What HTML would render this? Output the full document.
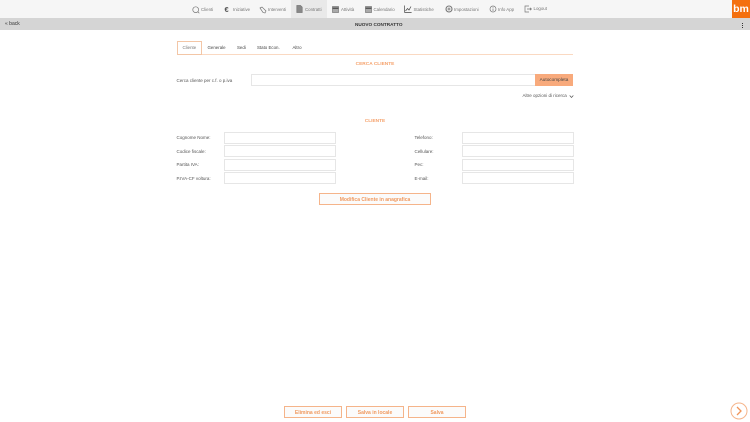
<!DOCTYPE html>
<html><head><meta charset="utf-8"><style>
html,body{margin:0;padding:0;width:750px;height:422px;overflow:hidden;background:#fff;font-family:"Liberation Sans",sans-serif}
#w{position:absolute;left:0;top:0;width:750px;height:422px;filter:blur(.25px)}
.a{position:absolute;white-space:nowrap}
.n{top:6px;font-size:4.4px;line-height:7px;color:#777}
.l{font-size:4.5px;line-height:7px;color:#555}
.i{position:absolute;box-sizing:border-box;background:#fff;border:1px solid #e6e6e6;height:12px;width:112px}
.b{position:absolute;box-sizing:border-box;border:1px solid #f5b48a;background:#fbfbfb;color:#f09a60;font-size:5px;font-weight:bold;text-align:center;height:12px;line-height:12.5px}
.t{font-size:4.4px;line-height:7px;color:#444;top:44px}
.h{font-size:4.8px;font-weight:bold;color:#f5a26c;line-height:7px}
svg{position:absolute;fill:none;stroke:#777;stroke-width:.7}
</style></head><body><div id="w">
<div class="a" style="left:0;top:0;width:750px;height:18px;background:#f6f6f6"></div>
<div class="a" style="left:291px;top:0;width:36px;height:18px;background:#e9e9e9"></div>
<div class="a" style="left:0;top:18px;width:750px;height:12px;background:#d5d5d5"></div>
<div class="a" style="left:732px;top:0;width:18px;height:18px;background:#f4700f;color:#fff;font-size:10.5px;font-weight:bold;line-height:19px;text-align:center">bm</div>

<svg style="left:192px;top:5.5px" width="8" height="8"><circle cx="3.7" cy="3.7" r="2.9"/><path d="M5.8 5.8L7.3 7.3"/></svg>
<div class="a n" style="left:201px">Clienti</div>
<div class="a" style="left:224.5px;top:4.5px;font-size:7.5px;line-height:10px;font-weight:bold;color:#555">€</div>
<div class="a n" style="left:233px">Iniziative</div>
<svg style="left:259px;top:5.5px" width="8" height="8"><path d="M1 2L3 1L7 5L6 7L4 6.5Z"/></svg>
<div class="a n" style="left:268px">Interventi</div>
<svg style="left:296px;top:5px" width="7" height="8"><path d="M.8.5H4.5L6.2 2.2V7.5H.8Z" fill="#888"/></svg>
<div class="a n" style="left:305px">Contratti</div>
<svg style="left:332px;top:5.5px" width="7" height="7"><rect x=".5" y=".5" width="6" height="6" fill="#aaa"/><path d="M.5 2.2H6.5" stroke="#444" stroke-width="1.2"/></svg>
<div class="a n" style="left:341px">Attività</div>
<svg style="left:365px;top:5.5px" width="7" height="7"><rect x=".5" y=".5" width="6" height="6" fill="#aaa"/><path d="M.5 2.2H6.5" stroke="#444" stroke-width="1.2"/></svg>
<div class="a n" style="left:373.5px">Calendario</div>
<svg style="left:404px;top:5px" width="8" height="8"><path d="M.6.5V7.4H7.6M1.5 6L3.5 3.5L5 5L7 1.5" stroke="#444"/></svg>
<div class="a n" style="left:413.5px">Statistiche</div>
<svg style="left:445px;top:5px" width="8" height="8"><circle cx="4" cy="4" r="3" stroke-width="1.1"/><circle cx="4" cy="4" r="1"/></svg>
<div class="a n" style="left:454px">Impostazioni</div>
<svg style="left:489px;top:5px" width="8" height="8"><circle cx="4" cy="4" r="3"/><path d="M4 3.5V6M4 2V2.8"/></svg>
<div class="a n" style="left:498px">Info App</div>
<svg style="left:524px;top:4.5px" width="8" height="8"><path d="M5 1H1V7H5M3 4H7.5M6 2.8L7.5 4L6 5.2"/></svg>
<div class="a n" style="left:533.5px;top:5px">Logout</div>

<div class="a" style="left:5px;top:21px;font-size:5px;line-height:7px;color:#333">« back</div>
<div class="a" style="left:355px;top:21px;font-size:4.7px;line-height:7px;font-weight:bold;color:#333">NUOVO CONTRATTO</div>
<div class="a" style="left:741.5px;top:22.5px;width:1.5px;height:1.5px;background:#333;box-shadow:0 2px #333,0 4px #333"></div>

<div class="a" style="left:177px;top:54px;width:396px;height:1px;background:#fad9c2"></div>
<div class="a" style="left:176.5px;top:40.5px;width:25px;height:14px;box-sizing:border-box;border:1px solid #f3c6a6;background:#fff"></div>
<div class="a t" style="left:182.5px;color:#777">Cliente</div>
<div class="a t" style="left:207.5px">Generale</div>
<div class="a t" style="left:237px">Sedi</div>
<div class="a t" style="left:257px">Stato Econ.</div>
<div class="a t" style="left:292.5px">Altro</div>

<div class="a h" style="left:0;width:750px;text-align:center;top:61px">CERCA CLIENTE</div>
<div class="a l" style="left:176.5px;top:76.5px">Cerca cliente per c.f. o p.iva</div>
<div class="i" style="left:251px;top:74px;width:285px"></div>
<div class="a" style="left:535px;top:74px;width:38px;height:12px;background:#f8aa7c;color:#444;font-size:4.7px;line-height:12.5px;text-align:center">Autocompleta</div>
<div class="a l" style="left:522.5px;top:92px">Altre opzioni di ricerca</div>
<svg style="left:569px;top:93.5px" width="5" height="5"><path d="M.7 1.5L2.5 3.5L4.3 1.5" stroke="#555"/></svg>
<div class="a h" style="left:0;width:750px;text-align:center;top:117.5px">CLIENTE</div>

<div class="a l" style="left:176.5px;top:134px">Cognome Nome:</div>
<div class="a l" style="left:176.5px;top:147.5px">Codice fiscale:</div>
<div class="a l" style="left:176.5px;top:161px">Partita IVA:</div>
<div class="a l" style="left:176.5px;top:174.5px">P.IVA-CF voltura:</div>
<div class="i" style="left:224px;top:132px"></div>
<div class="i" style="left:224px;top:145px"></div>
<div class="i" style="left:224px;top:159px"></div>
<div class="i" style="left:224px;top:172px"></div>
<div class="a l" style="left:414.5px;top:134px">Telefono:</div>
<div class="a l" style="left:414.5px;top:147.5px">Cellulare:</div>
<div class="a l" style="left:414.5px;top:161px">Pec:</div>
<div class="a l" style="left:414.5px;top:174.5px">E-mail:</div>
<div class="i" style="left:462px;top:132px"></div>
<div class="i" style="left:462px;top:145px"></div>
<div class="i" style="left:462px;top:159px"></div>
<div class="i" style="left:462px;top:172px"></div>

<div class="b" style="left:319px;top:193px;width:112px">Modifica Cliente in anagrafica</div>
<div class="b" style="left:284px;top:406px;width:58px">Elimina ed esci</div>
<div class="b" style="left:346px;top:406px;width:58px">Salva in locale</div>
<div class="b" style="left:408px;top:406px;width:58px">Salva</div>
<svg style="left:730px;top:402px;stroke:#f5b48a" width="18" height="18"><circle cx="9" cy="9" r="8" stroke-width="1"/><path d="M7 5L11 9L7 13" stroke="#f0955a" stroke-width="1.3"/></svg>
</div></body></html>
